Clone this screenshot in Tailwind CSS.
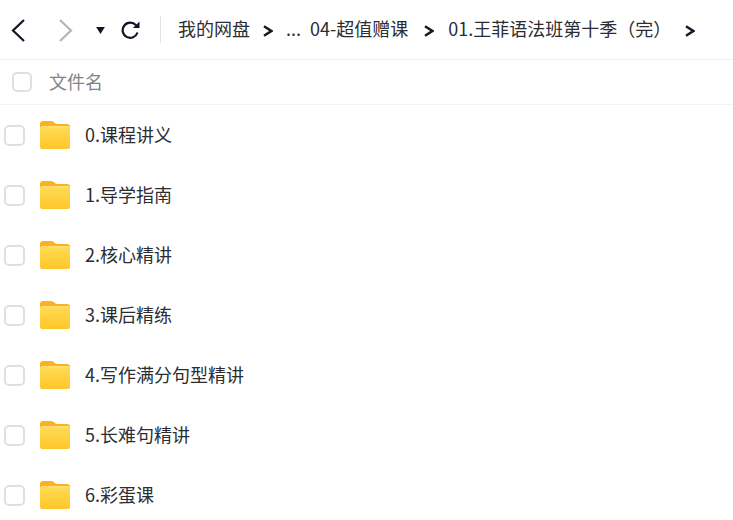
<!DOCTYPE html>
<html><head><meta charset="utf-8"><script src="https://cdn.jsdelivr.net/npm/@tailwindcss/browser@4"></script></head>
<body class="bg-white overflow-hidden">
<svg class="absolute w-0 h-0" width="0" height="0"><defs>
  <linearGradient id="fg" x1="0" y1="0" x2="0" y2="1"><stop offset="0" stop-color="#ffe27a"/><stop offset="0.12" stop-color="#ffd94f"/><stop offset="1" stop-color="#ffc62a"/></linearGradient>
  <symbol id="folder" viewBox="0 0 30 28"><path d="M0 3Q0 0 3 0H11Q13 0 14.5 1.5L16 3H27Q30 3 30 6V25Q30 28 27 28H3Q0 28 0 25Z" fill="#fdb022"/><path d="M0 7.5Q0 5 2.5 5H27.5Q30 5 30 7.5V25Q30 28 27 28H3Q0 28 0 25Z" fill="url(#fg)"/></symbol>
  <symbol id="chev" viewBox="0 0 10 12"><path d="M1 1.2 8.3 6 1 10.8" fill="none" stroke="#141a28" stroke-width="2.5"/></symbol>
</defs></svg>
<div class="w-[733px] h-[520px] overflow-hidden font-['Noto_Sans_CJK_SC','Liberation_Sans',sans-serif] text-[#2b2d33]">
  <div class="h-[60px] flex items-center border-b border-[#f0f0f0]">
    <svg class="ml-[10px] w-[16px] h-[24px]" viewBox="0 0 16 24" fill="none" stroke="#0f1624" stroke-width="2.2"><path d="M14 2 3 12.5 14 23"/></svg>
    <svg class="ml-[32px] w-[16px] h-[24px]" viewBox="0 0 16 24" fill="none" stroke="#b5b5b5" stroke-width="2.2"><path d="M2 2 13 12.5 2 23"/></svg>
    <svg class="ml-[22px] mt-[2px] w-[9px] h-[7px]" viewBox="0 0 10 8" fill="#0f1624"><path d="M0 0h10L5 8z"/></svg>
    <svg class="ml-[16px] w-[20px] h-[20px]" viewBox="0 0 20 20" fill="none" stroke="#0f1624" stroke-width="2.2"><path d="M16.5 12.5A7.6 7.6 0 1 1 15 5.2"/><path d="M18.5 1.5v6.6h-6.6z" fill="#0f1624" stroke="none"/></svg>
    <div class="ml-[19px] w-px h-[27px] bg-[#e4e4e4]"></div>
    <span class="ml-[17px] pb-[2px] text-[18px]">我的网盘</span>
    <svg class="ml-[13px] mt-[2px] w-[10px] h-[12px]"><use href="#chev"/></svg>
    <span class="ml-[13px] pb-[2px] text-[18px]">...</span>
    <span class="ml-[9px] pb-[2px] text-[18px]">04-超值赠课</span>
    <svg class="ml-[16px] mt-[2px] w-[10px] h-[12px]"><use href="#chev"/></svg>
    <span class="ml-[14px] pb-[2px] text-[18px]">01.王菲语法班第十季（完）</span>
    <svg class="ml-[14px] mt-[2px] w-[10px] h-[12px]"><use href="#chev"/></svg>
  </div>
  <div class="h-[45px] flex items-center border-b border-[#f3f3f3]">
    <div class="ml-[12px] w-[20px] h-[20px] rounded-[5px] border-2 border-[#e0e0e0]"></div>
    <span class="ml-[17px] pb-[2px] text-[18px] text-[#80838a]">文件名</span>
  </div>
  <div class="flex flex-col">
    <div class="h-[60px] flex items-center">
      <div class="ml-[4px] w-[21px] h-[21px] rounded-[5px] border-2 border-[#e0e0e0]"></div>
      <svg class="ml-[15px] w-[30px] h-[28px]"><use href="#folder"/></svg>
      <span class="ml-[15px] pb-[2px] text-[18px]">0.课程讲义</span>
    </div>
    <div class="h-[60px] flex items-center">
      <div class="ml-[4px] w-[21px] h-[21px] rounded-[5px] border-2 border-[#e0e0e0]"></div>
      <svg class="ml-[15px] w-[30px] h-[28px]"><use href="#folder"/></svg>
      <span class="ml-[15px] pb-[2px] text-[18px]">1.导学指南</span>
    </div>
    <div class="h-[60px] flex items-center">
      <div class="ml-[4px] w-[21px] h-[21px] rounded-[5px] border-2 border-[#e0e0e0]"></div>
      <svg class="ml-[15px] w-[30px] h-[28px]"><use href="#folder"/></svg>
      <span class="ml-[15px] pb-[2px] text-[18px]">2.核心精讲</span>
    </div>
    <div class="h-[60px] flex items-center">
      <div class="ml-[4px] w-[21px] h-[21px] rounded-[5px] border-2 border-[#e0e0e0]"></div>
      <svg class="ml-[15px] w-[30px] h-[28px]"><use href="#folder"/></svg>
      <span class="ml-[15px] pb-[2px] text-[18px]">3.课后精练</span>
    </div>
    <div class="h-[60px] flex items-center">
      <div class="ml-[4px] w-[21px] h-[21px] rounded-[5px] border-2 border-[#e0e0e0]"></div>
      <svg class="ml-[15px] w-[30px] h-[28px]"><use href="#folder"/></svg>
      <span class="ml-[15px] pb-[2px] text-[18px]">4.写作满分句型精讲</span>
    </div>
    <div class="h-[60px] flex items-center">
      <div class="ml-[4px] w-[21px] h-[21px] rounded-[5px] border-2 border-[#e0e0e0]"></div>
      <svg class="ml-[15px] w-[30px] h-[28px]"><use href="#folder"/></svg>
      <span class="ml-[15px] pb-[2px] text-[18px]">5.长难句精讲</span>
    </div>
    <div class="h-[60px] flex items-center">
      <div class="ml-[4px] w-[21px] h-[21px] rounded-[5px] border-2 border-[#e0e0e0]"></div>
      <svg class="ml-[15px] w-[30px] h-[28px]"><use href="#folder"/></svg>
      <span class="ml-[15px] pb-[2px] text-[18px]">6.彩蛋课</span>
    </div>
  </div>
</div>
</body></html>
